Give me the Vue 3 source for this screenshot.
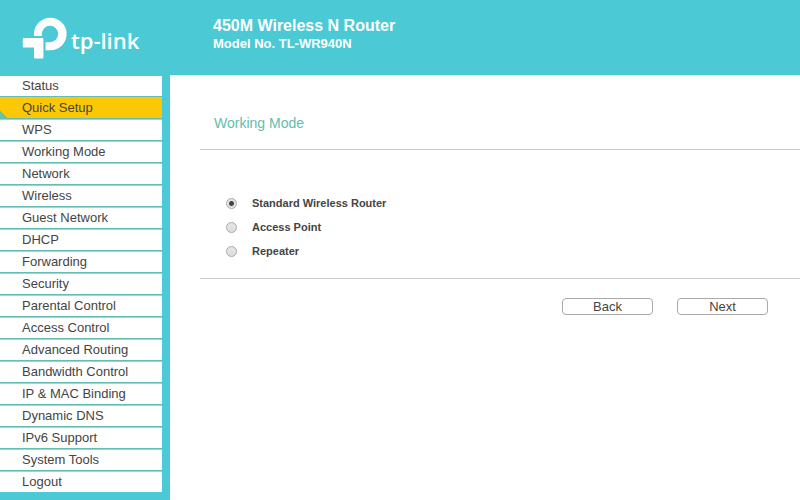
<script setup>
import { ref } from 'vue'

const items = [
  'Status', 'Quick Setup', 'WPS', 'Working Mode', 'Network', 'Wireless',
  'Guest Network', 'DHCP', 'Forwarding', 'Security', 'Parental Control',
  'Access Control', 'Advanced Routing', 'Bandwidth Control',
  'IP & MAC Binding', 'Dynamic DNS', 'IPv6 Support', 'System Tools', 'Logout',
]
const active = ref('Quick Setup')

const modes = [
  { id: 'router', label: 'Standard Wireless Router' },
  { id: 'ap', label: 'Access Point' },
  { id: 'repeater', label: 'Repeater' },
]
const mode = ref('router')
</script>

<template>
  <div class="page">
    <header class="header">
      <div class="brand">
        <svg class="mark" width="46" height="42" viewBox="0 0 46 42" aria-hidden="true">
          <path d="M12 19V17A16.3 16.3 0 1 1 28.3 33.3H23.6V25.2H28A8.2 8.2 0 1 0 19.8 17V19Z" />
          <path d="M2 21H20.2A1.2 1.2 0 0 1 21.4 22.2V40.2A1.2 1.2 0 0 1 20.2 41.4H13.2A1.2 1.2 0 0 1 12 40.2V30.6H2A1.2 1.2 0 0 1 .8 29.4V22.2A1.2 1.2 0 0 1 2 21Z" />
        </svg>
        <span class="wordmark">tp-link</span>
      </div>
      <div class="product">
        <h1>450M Wireless N Router</h1>
        <p>Model No. TL-WR940N</p>
      </div>
    </header>

    <div class="body">
      <nav class="sidebar">
        <a
          v-for="item in items"
          :key="item"
          href="#"
          :class="['item', { active: item === active }]"
          @click.prevent="active = item"
        >{{ item }}</a>
      </nav>

      <main class="content">
        <h2>Working Mode</h2>
        <form class="panel" @submit.prevent>
          <div class="modes">
            <label v-for="m in modes" :key="m.id" class="mode">
              <input v-model="mode" type="radio" name="mode" :value="m.id">
              <span>{{ m.label }}</span>
            </label>
          </div>
          <div class="actions">
            <button type="button">Back</button>
            <button type="submit">Next</button>
          </div>
        </form>
      </main>
    </div>
  </div>
</template>

<style>
body {
  margin: 0;
  background: #4bcad6;
}
</style>

<style scoped>
.page {
  display: flex;
  flex-direction: column;
  min-height: 100vh;
  font-family: "Liberation Sans", Arial, sans-serif;
  color: #444;
  background: #4bcad6;
}

.header {
  display: flex;
  align-items: flex-start;
  height: 75px;
  color: #fff;
}

.brand {
  display: flex;
  flex: 0 0 191px;
  padding: 17px 0 0 22px;
}

.mark {
  fill: #fff;
}

.wordmark {
  margin: 8px 0 0 3px;
  font-family: "Open Sans", sans-serif;
  font-size: 22px;
  font-weight: 600;
  line-height: 30px;
}

.product h1,
.product p {
  margin: 0;
  font-weight: bold;
}

.product h1 {
  padding-top: 16px;
  font-size: 16px;
  line-height: 20px;
}

.product p {
  font-size: 13px;
  line-height: 16px;
}

.body {
  display: flex;
  flex: 1;
}

.sidebar {
  flex: 0 0 162px;
  margin-right: 8px;
}

.item {
  display: block;
  height: 20px;
  padding-left: 22px;
  border-top: 1px solid #8fd9d6;
  border-bottom: 1px solid #62bdb4;
  font-size: 13px;
  line-height: 20px;
  color: #444;
  text-decoration: none;
  background: #fff;
}

.item:first-child {
  border-top-color: #4bcad6;
}

.item:last-child {
  border-bottom-color: #4bcad6;
}

.item.active {
  background: linear-gradient(45deg, #62c4a0 5px, #fcc806 5px);
}

.content {
  flex: 1;
  min-width: 0;
  padding: 38px 0 0 30px;
  background: #fff;
}

h2 {
  margin: 0;
  padding: 0 0 16px 14px;
  font-size: 14px;
  font-weight: normal;
  line-height: 20px;
  color: #64bdad;
  border-bottom: 1px solid #ccc;
}

.modes {
  padding: 41px 0 15px 26px;
  border-bottom: 1px solid #ccc;
}

.mode {
  display: flex;
  align-items: center;
  gap: 15px;
  height: 24px;
  font-size: 11px;
  line-height: 14px;
  font-weight: bold;
}

.mode input {
  appearance: none;
  box-sizing: border-box;
  width: 11px;
  height: 11px;
  margin: 0;
  border: 1px solid #aaa;
  border-radius: 50%;
  background: linear-gradient(#e6e6e6, #dcdcdc);
}

.mode input:checked {
  background: radial-gradient(circle, #444 2px, #e4e4e4 3px);
}

.actions {
  display: flex;
  justify-content: flex-end;
  gap: 24px;
  padding: 19px 32px 0 0;
}

.actions button {
  width: 91px;
  height: 17px;
  padding: 0;
  border: 1px solid #aaa;
  border-radius: 4px;
  font-family: inherit;
  font-size: 13px;
  line-height: 15px;
  color: #444;
  background: #fff;
}
</style>
